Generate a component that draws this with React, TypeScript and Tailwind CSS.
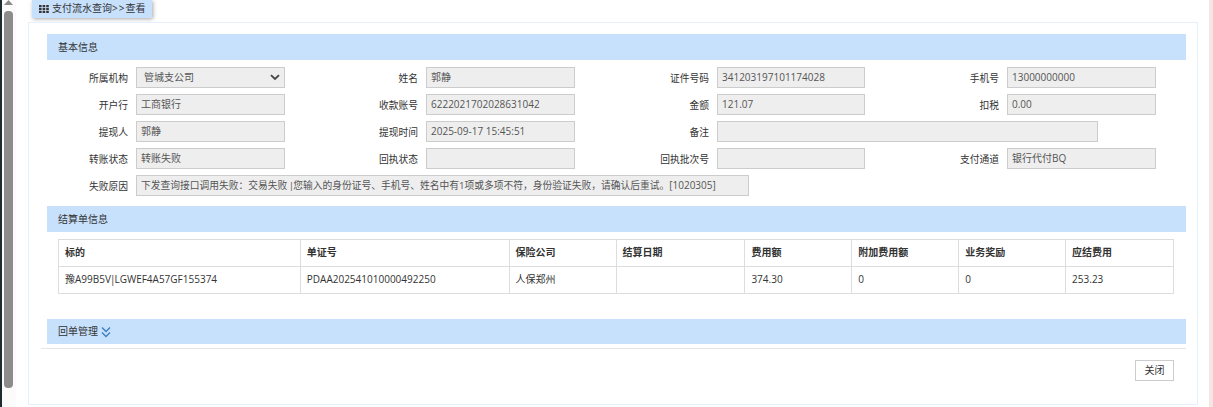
const FONT = "font-['Open_Sans','Noto_Sans_CJK_SC',sans-serif]";

function Field({ label, value, wide, select, small }: { label: string; value: React.ReactNode; wide?: string; select?: boolean; small?: boolean }) {
  return (
    <div className="flex items-center">
      <div className="h-[21px] w-[81px] shrink-0 pt-[1px] text-right text-[9.75px] leading-[21px] text-[#333]">{label}</div>
      <div className={`ml-[8px] flex h-[21px] shrink-0 items-center justify-between border border-[#ccc] bg-[#eee] text-[#555] ${small ? "text-[9.75px]" : "text-[10px]"} ${select ? "pl-[7px] pr-[3px]" : "pl-[4px]"} ${wide ?? "w-[149px]"}`}>
        <span className="whitespace-nowrap">{value}</span>
        {select && (
          <svg width="10" height="7" viewBox="0 0 10 7" className="mr-[1px]">
            <path d="M1 1.2 L5 5 L9 1.2" fill="none" stroke="#444" strokeWidth="1.8" />
          </svg>
        )}
      </div>
    </div>
  );
}

function Section({ title }: { title: string }) {
  return (
    <div className="flex h-[26px] items-center bg-[#c7e0fc] pl-[11px] text-[10px] text-[#333]">
      {title}
    </div>
  );
}

const rows = [
  [
    { label: "所属机构", value: "管城支公司", select: true },
    { label: "姓名", value: "郭静" },
    { label: "证件号码", value: "341203197101174028", wide: "w-[148px]" },
    { label: "手机号", value: "13000000000" },
  ],
  [
    { label: "开户行", value: "工商银行" },
    { label: "收款账号", value: "6222021702028631042" },
    { label: "金额", value: "121.07", wide: "w-[148px]" },
    { label: "扣税", value: "0.00" },
  ],
  [
    { label: "提现人", value: "郭静" },
    { label: "提现时间", value: "2025-09-17 15:45:51" },
    { label: "备注", value: "", wide: "w-[381px]" },
  ],
  [
    { label: "转账状态", value: "转账失败" },
    { label: "回执状态", value: "" },
    { label: "回执批次号", value: "", wide: "w-[148px]" },
    { label: "支付通道", value: "银行代付BQ" },
  ],
];

const headers = ["标的", "单证号", "保险公司", "结算日期", "费用额", "附加费用额", "业务奖励", "应结费用"];
const cells: React.ReactNode[] = [
  <>豫A99B5V<span className="mx-[-1px]">|</span>LGWEF4A57GF155374</>,
  "PDAA202541010000492250",
  "人保郑州",
  "",
  "374.30",
  "0",
  "0",
  "253.23",
];
const widths = ["w-[242px]", "w-[209px]", "w-[107px]", "w-[129px]", "w-[107px]", "w-[107px]", "w-[107px]", "w-[108px]"];

export default function App() {
  return (
    <div className={`${FONT} flex h-[407px] w-[1213px] overflow-hidden bg-white`}>
      <div className="w-[2px] shrink-0 bg-[#1f2b33]" />
      <div className="flex w-[14px] shrink-0 flex-col items-center bg-[#fbfbfb] pl-[1px] pr-[2px]">
        <svg width="9" height="5" viewBox="0 0 9 5" className="shrink-0">
          <path d="M4.5 0 L9 5 L0 5 Z" fill="#8a8a8a" />
        </svg>
        <div className="mt-[6px] h-[377px] w-[9px] rounded-[4px] bg-[#8c8c8c]" />
      </div>

      <div className="w-[12px] shrink-0" />

      <div className="flex min-w-0 flex-1 flex-col">
        <div className="h-[22px] shrink-0">
          <div className="ml-[4px] flex h-[18px] w-[120px] items-center gap-[3px] bg-[#c7e0fc] pb-[1px] pl-[7px] text-[10px] text-[#333] shadow-[1px_1px_4px_rgba(0,0,0,0.35)]">
            <svg width="10" height="8" viewBox="0 0 10 8" className="shrink-0">
              <path d="M0 0h2.6v2.2H0zM3.6 0h2.6v2.2H3.6zM7.2 0h2.6v2.2H7.2zM0 3h2.6v2.2H0zM3.6 3h2.6v2.2H3.6zM7.2 3h2.6v2.2H7.2zM0 6h2.6v2H0zM3.6 6h2.6v2H3.6zM7.2 6h2.6v2H7.2z" fill="#333" />
            </svg>
            <span className="whitespace-nowrap">支付流水查询<span className="tracking-[1px]">&gt;&gt;</span>查看</span>
          </div>
        </div>

        <div className="h-[383px] w-[1170px] border border-[#e6f0fb] pl-[18px] pr-[11px] pt-[11px]">
          <Section title="基本信息" />
          <div className="flex flex-col gap-[6px] pt-[7px]">
            {rows.map((row, i) => (
              <div key={i} className="grid grid-cols-[290px_291px_290px_290px]">
                {row.map((f) => (
                  <Field key={f.label} {...f} />
                ))}
              </div>
            ))}
            <Field
              label="失败原因"
              small
              value={<>下发查询接口调用失败：交易失败 <span className="mx-[-1px]">|</span>您输入的身份证号、手机号、姓名中有1项或多项不符，身份验证失败，请确认后重试。<span className="text-[10px]">[1020305]</span></>}
              wide="w-[613px]"
            />
          </div>

          <div className="mt-[10px]">
            <Section title="结算单信息" />
          </div>

          <div className="ml-[11px] mt-[7px] w-[1116px] border-t border-l border-[#ddd] text-[10px]">
            <div className="flex h-[27px]">
              {headers.map((h, i) => (
                <div key={h} className={`${widths[i]} flex items-center border-r border-b border-[#ddd] pb-[2px] pl-[6px] font-semibold text-[#333]`}>
                  {h}
                </div>
              ))}
            </div>
            <div className="flex h-[27px]">
              {cells.map((c, i) => (
                <div key={i} className={`${widths[i]} flex items-center whitespace-nowrap border-r border-b border-[#ddd] pb-[2px] pl-[6px] text-[#333]`}>
                  {c}
                </div>
              ))}
            </div>
          </div>

          <div className="mt-[25px]">
            <div className="flex h-[25px] items-center bg-[#c7e0fc] pl-[11px] text-[10px] text-[#333]">
              回单管理
              <svg width="10" height="12" viewBox="0 0 10 12" className="ml-[3px]">
                <path d="M1 1.5 L5 5.5 L9 1.5 M1 6.5 L5 10.5 L9 6.5" fill="none" stroke="#3f7fc0" strokeWidth="1.4" />
              </svg>
            </div>
          </div>
          <div className="-ml-[6px] mt-[4px] h-px w-[1145px] bg-[#e5e5e5]" />

          <div className="flex justify-end pr-[12px] pt-[11px]">
            <div className="flex h-[21px] w-[39px] items-center justify-center border border-[#ccc] text-[10px] text-[#333]">关闭</div>
          </div>
        </div>
      </div>

      <div className="w-[4px] shrink-0 bg-[#f5e6e3]" />
    </div>
  );
}
